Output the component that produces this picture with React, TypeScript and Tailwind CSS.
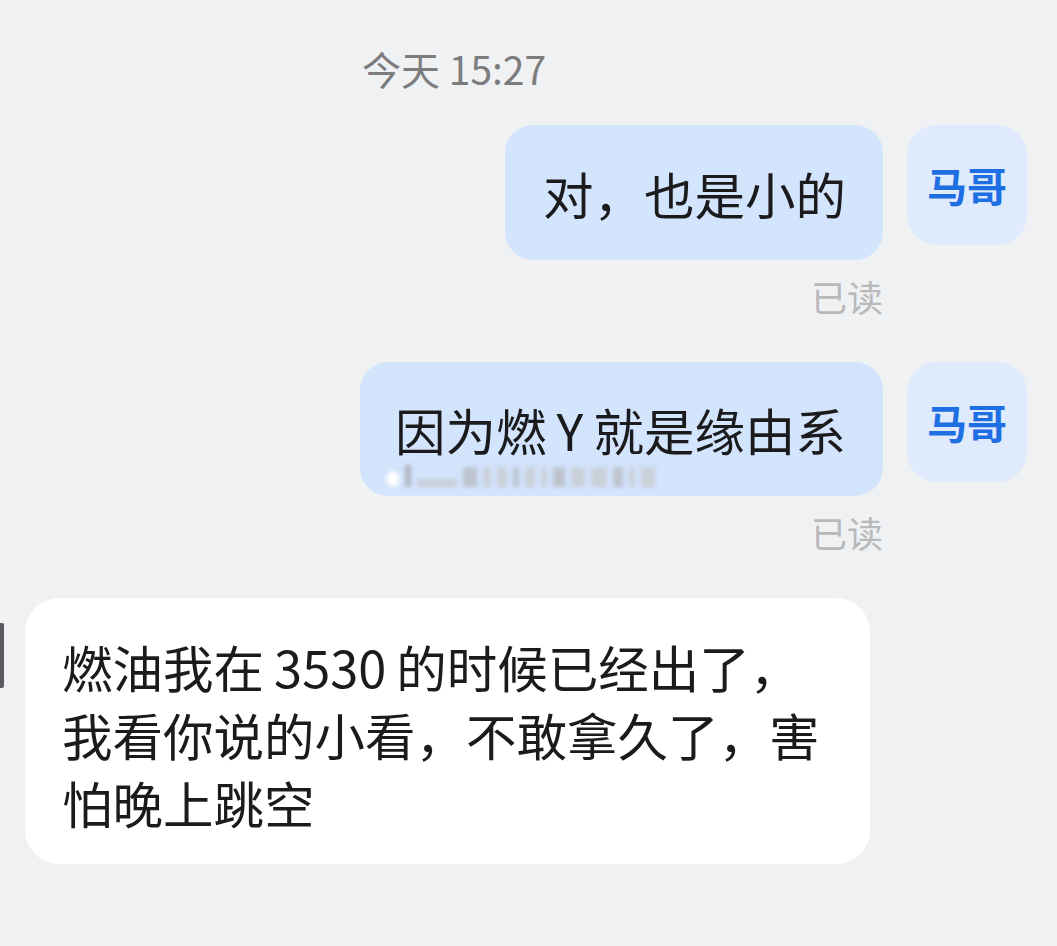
import React from "react";

const font = { fontFamily: '"Noto Sans CJK SC", "Noto Sans", sans-serif' };

const Avatar: React.FC<{ name: string }> = ({ name }) => (
  <div className="flex h-[120px] w-[120px] shrink-0 items-center justify-center rounded-[30px] bg-[#dfeafc] text-[40px] font-bold text-[#1e6fe3]">
    {name}
  </div>
);

const MyMessage: React.FC<{ children: React.ReactNode; className?: string }> = ({ children, className }) => (
  <div className={"flex flex-row items-start justify-end gap-[24px] pr-[30px] " + (className ?? "")}>
    <div className="flex flex-col items-end">
      {children}
      <div className="mt-[16px] text-[36px] leading-[40px] text-[#b8b9bb]">已读</div>
    </div>
    <Avatar name="马哥" />
  </div>
);

// blurred second line of the quoted message
const blurBars = [14, 8, 10, 6, 10, 6, 12, 14, 16, 10, 6, 14];

export default function App() {
  return (
    <div style={font} className="flex h-[946px] w-[1057px] flex-col overflow-hidden bg-[#f0f1f3]">
      <div className="ml-[362px] pt-[46px] text-[39px] leading-[44px] text-[#7c7c7e]">今天 15:27</div>

      <MyMessage className="mt-[35px]">
        <div className="flex h-[135px] items-center whitespace-nowrap rounded-[28px] bg-[#d3e4fd] pl-[38px] pr-[37px] text-[50.5px] leading-[60px] text-[#1b1b1d]">
          对，也是小的
        </div>
      </MyMessage>

      <MyMessage className="mt-[46px]">
        <div className="flex h-[134px] flex-col rounded-[28px] bg-[#d3e4fd] pl-[35px] pr-[37px] pt-[37px]">
          <div className="whitespace-nowrap text-[50.5px] leading-[60px] text-[#1b1b1d]">因为燃{"\u2009"}Y{"\u2009"}就是缘由系</div>
          <div className="-ml-[8px] mt-[6px] flex h-[22px] flex-row items-end gap-[6px] blur-[2px]">
            <div className="h-[16px] w-[12px] rounded-full bg-white" />
            <div className="h-[22px] w-[6px] bg-[#b0b6c0]" />
            <div className="h-[8px] w-[40px] bg-[#c8ced8]" />
            {blurBars.map((w, i) => (
              <div key={i} style={{ width: w }} className={"h-[20px] " + (i % 3 === 0 ? "bg-[#bcc3cd]" : "bg-[#cad0da]")} />
            ))}
          </div>
        </div>
      </MyMessage>

      <div className="mt-[46px] flex flex-row items-start">
        <div className="mt-[25px] h-[65px] w-[4px] rounded-r-[2px] bg-[#5a5b5e]" />
        <div className="ml-[21px] h-[266px] w-[845px] rounded-[34px] bg-white pl-[37px] pr-[20px] pt-[34px] text-[50.5px] leading-[68px] text-[#1b1b1d]">
          燃油我在{"\u2009"}3530{"\u2009"}的时候已经出了，
          <br />
          我看你说的小看，不敢拿久了，害
          <br />
          怕晚上跳空
        </div>
      </div>
    </div>
  );
}
